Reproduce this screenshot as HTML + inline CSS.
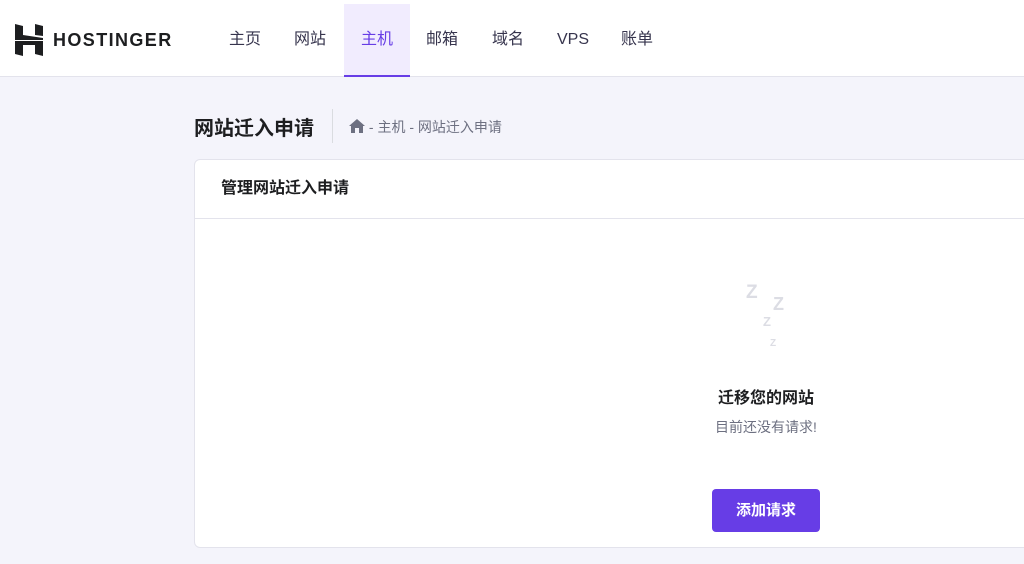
<!DOCTYPE html>
<html><head><meta charset="utf-8"><style>
*{margin:0;padding:0;box-sizing:border-box}
body{width:1024px;height:564px;overflow:hidden;background:#f4f4fb;font-family:"Liberation Sans","Noto Sans CJK SC",sans-serif;color:#36344d;position:relative}
.hdr{position:absolute;left:0;top:0;width:1024px;height:77px;background:#fff;border-bottom:1px solid #e3e3ec}
.logo{position:absolute;left:15px;top:24px}
.brand{position:absolute;left:53px;top:30px;font-weight:bold;font-size:18px;letter-spacing:1.4px;color:#1d1e20}
.nav a{position:absolute;top:0;height:77px;line-height:80px;font-size:16px;color:#36344d;text-decoration:none;transform:translateX(-50%)}
.act{position:absolute;left:344px;top:4px;width:66px;height:73px;background:#f1ecfe;border-bottom:2px solid #673de6}
.title{position:absolute;left:194px;top:112px;font-size:20px;font-weight:bold;color:#1d1e20}
.sep{position:absolute;left:332px;top:109px;width:1px;height:34px;background:#dadce0}
.crumb{position:absolute;left:349px;top:117px;font-size:14px;color:#6d7081}
.card{position:absolute;left:194px;top:159px;width:840px;height:389px;background:#fff;border:1px solid #e3e3ec;border-radius:6px}
.ch{height:59px;border-bottom:1px solid #e3e3ec;padding-left:26px;line-height:58px;font-size:16px;font-weight:bold;color:#1d1e20}
.z{position:absolute;font-weight:bold;color:#dcdde4;font-family:"Liberation Sans",sans-serif}
.t1{position:absolute;left:0;width:1532px;text-align:center;top:384px;font-size:16px;font-weight:bold;color:#1d1e20}
.t2{position:absolute;left:0;width:1532px;text-align:center;top:417px;font-size:14px;color:#6d7081}
.btn{position:absolute;left:712px;top:489px;width:108px;height:43px;background:#673de6;border-radius:4px;color:#fff;font-weight:bold;font-size:15px;text-align:center;line-height:43px}
</style></head><body>
<div class="hdr">
<svg class="logo" width="28" height="32" viewBox="0 0 28 32"><path d="M0 0L8 2V11L28 14V16H0Z M20 0L28 2V12L20 11Z M0 17H28V32L20 30V21H8V32L0 30Z" fill="#1d1e20"/></svg>
<div class="brand">HOSTINGER</div>
<div class="act"></div>
<div class="nav">
<a style="left:245px">主页</a><a style="left:310px">网站</a><a style="left:377px;color:#673de6">主机</a><a style="left:442px">邮箱</a><a style="left:508px">域名</a><a style="left:573px">VPS</a><a style="left:637px">账单</a>
</div></div>
<div class="title">网站迁入申请</div>
<div class="sep"></div>
<div class="crumb"><svg width="16" height="14" viewBox="0 0 16 14" style="vertical-align:-1px"><path d="M8 0L0 7H2V14H6V9H10V14H14V7H16Z" fill="#6d7081"/></svg> - 主机 - 网站迁入申请</div>
<div class="card"><div class="ch">管理网站迁入申请</div></div>
<div class="z" style="left:746px;top:282px;font-size:19px">Z</div>
<div class="z" style="left:773px;top:294px;font-size:18px">Z</div>
<div class="z" style="left:763px;top:314px;font-size:13px">Z</div>
<div class="z" style="left:770px;top:338px;font-size:10px">Z</div>
<div class="t1">迁移您的网站</div>
<div class="t2">目前还没有请求!</div>
<div class="btn">添加请求</div>
</body></html>
